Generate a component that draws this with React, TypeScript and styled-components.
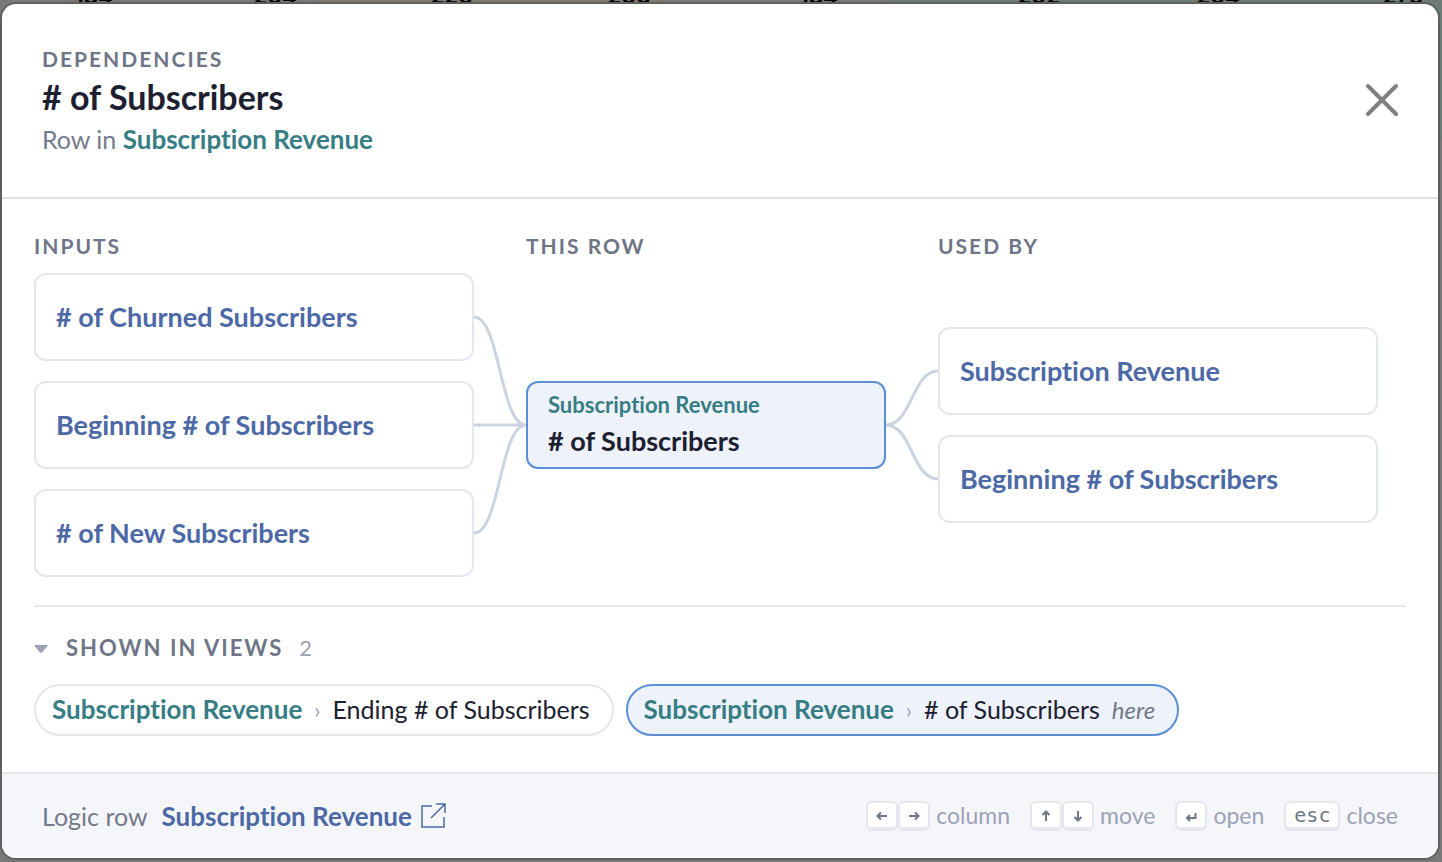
import React from "react";
import styled, { createGlobalStyle, css } from "styled-components";

const Global = createGlobalStyle`
  * { box-sizing: border-box; }
  html, body, #root { height: 100%; }
  body {
    margin: 0;
    background: #797979;
    font-family: Lato, "Open Sans", sans-serif;
    font-variant-ligatures: none;
    color: #1c2030;
  }
  h1, h2, p, ul { margin: 0; padding: 0; }
  ul { list-style: none; }
  button { font: inherit; font-variant-ligatures: none; cursor: pointer; }
  a { color: inherit; text-decoration: none; }
`;

const Page = styled.div`
  position: relative;
  min-height: 100%;
  padding: 4px 4px 4px 2px;
  display: flex;
  overflow: hidden;
`;

const Sheet = styled.div`
  position: absolute;
  inset: 0;
  background: linear-gradient(#6d7b76 140px, #797979 140px) right / 544px 100% no-repeat, #797979;
`;

const SheetRow = styled.div`
  display: flex;
  align-items: flex-end;
  height: 4px;
  overflow: hidden;
  background: linear-gradient(90deg, #797979 22%, #7f786c 22% 46%, #797979 46% 62%, #6d7b76 62%);
`;

const SheetCell = styled.span<{ $w: number }>`
  flex: ${(p) => p.$w} 0 0;
  text-align: right;
  font: 700 22px/28px Inter, sans-serif;
  height: 22px;
  color: #000;
`;

const Dialog = styled.section`
  position: relative;
  flex: 1;
  min-width: 0;
  display: flex;
  flex-direction: column;
  background: #fff;
  border-radius: 14px;
  box-shadow: 0 0 0 2px #5f6062;
  overflow: hidden;
`;

const Header = styled.header`
  display: flex;
  align-items: center;
  justify-content: space-between;
  height: 195px;
  padding: 0 40px;
  border-bottom: 2px solid #dfe3e9;
`;

const Overline = styled.p`
  font-size: 21px;
  line-height: 28px;
  font-weight: 700;
  letter-spacing: 2px;
  text-transform: uppercase;
  color: #6e7587;
`;

const Title = styled.h1`
  font-size: 34px;
  line-height: 48px;
  font-weight: 700;
`;

const Sub = styled.p`
  font-size: 25px;
  line-height: 36px;
  color: #737a8b;
`;

const ViewName = styled.strong`
  font-size: 26px;
  font-weight: 700;
  color: #377d84;
`;

const CloseButton = styled.button`
  display: flex;
  padding: 0 0 2px;
  border: 0;
  background: none;
  color: #808080;
`;

const Body = styled.main`
  flex: 1;
  padding: 32px 32px 0;
`;

const Graph = styled.div`
  display: grid;
  grid-template-columns: 440fr 52fr 360fr 52fr 440fr;
  padding: 0 28px 28px 0;
  border-bottom: 2px solid #e4e7ee;
`;

const Heading = styled.h2`
  font-size: 21px;
  line-height: 30px;
  font-weight: 700;
  letter-spacing: 2px;
  text-transform: uppercase;
  color: #6e7587;
`;

const Column = styled.div`
  display: flex;
  flex-direction: column;
  gap: 12px;
`;

const Nodes = styled.div`
  flex: 1;
  display: flex;
  flex-direction: column;
  justify-content: center;
  gap: 20px;
`;

const Node = styled.button<{ $current?: boolean }>`
  display: flex;
  flex-direction: column;
  justify-content: center;
  align-items: flex-start;
  height: 88px;
  padding: 0 20px;
  border: 2px solid #e4e7ee;
  border-radius: 12px;
  background: #fff;
  color: #4c69a6;
  font-size: 27px;
  line-height: 36px;
  font-weight: 700;
  text-align: left;
  ${(p) => p.$current && css`
    padding-bottom: 4px;
    border-color: #5a8fd4;
    background: #edf2fb;
    color: #1c2030;
  `}
`;

const NodeView = styled.span`
  font-size: 22px;
  color: #377d84;
`;

const Links = styled.svg`
  display: block;
  width: 100%;
  height: 304px;
  margin-top: 42px;
  fill: none;
  stroke: #cbd3e1;
  stroke-width: 3;
`;

const Toggle = styled.button`
  display: flex;
  align-items: center;
  margin: 26px 0 21px;
  padding: 0;
  border: 0;
  background: none;
  line-height: 30px;
  color: #9ba2b6;
  font-size: 22px;
`;

const ToggleLabel = styled.span`
  margin: 0 16px 0 18px;
  font-weight: 700;
  letter-spacing: 2px;
  text-transform: uppercase;
  color: #6e7587;
`;

const Chips = styled.ul`
  display: flex;
  gap: 12px;
`;

const Chip = styled.a<{ $current?: boolean }>`
  display: flex;
  align-items: center;
  height: 52px;
  padding: 0 22px 2px 16px;
  border: 2px solid ${(p) => (p.$current ? "#5a8fd4" : "#e4e7ee")};
  border-radius: 26px;
  background: ${(p) => (p.$current ? "#edf2fb" : "#fff")};
  font-size: 25px;
  white-space: nowrap;
`;

const Sep = styled.span`
  margin: 0 12px;
  color: #9ba2b6;
  font-size: 22px;
`;

const Here = styled.em`
  margin-left: 12px;
  color: #737a8b;
  font-size: 24px;
`;

const Footer = styled.footer`
  display: flex;
  align-items: center;
  justify-content: space-between;
  height: 86px;
  padding: 0 40px;
  border-top: 2px solid #e4e7ee;
  background: #f5f6fa;
`;

const Logic = styled.div`
  display: flex;
  align-items: center;
  gap: 14px;
  font-size: 25px;
  color: #737a8b;
`;

const LogicLink = styled.a`
  display: flex;
  align-items: center;
  gap: 8px;
  font-size: 26px;
  font-weight: 700;
  color: #4c69a6;
`;

const Hints = styled.ul`
  display: flex;
  gap: 20px;
`;

const Hint = styled.li`
  display: flex;
  align-items: center;
  color: #9ba2b6;
  font-size: 23px;
`;

const HintText = styled.span`
  margin: 0 0 2px 6px;
`;

const Key = styled.kbd`
  display: flex;
  align-items: center;
  justify-content: center;
  min-width: 32px;
  height: 30px;
  padding: 0 8px;
  border: 2px solid #e4e7ee;
  border-bottom-width: 4px;
  border-radius: 6px;
  background: #fff;
  color: #6e7587;
  font: 20px/24px "DejaVu Sans Mono", monospace;
`;

const KeyIcon = styled.svg`
  flex: none;
  width: 12px;
  height: 14px;
  fill: none;
  stroke: currentColor;
  stroke-width: 2;
`;

const keyPaths = {
  left: "M11 8H1.500M5 4.500L1.500 8 5 11.500",
  right: "M1 8h9.500M7 4.500L10.500 8 7 11.500",
  up: "M6 13V3.500M2.500 7L6 3.500 9.500 7",
  down: "M6 3v9.500M2.500 9L6 12.500 9.500 9",
  enter: "M10.500 5v5H2M5 7l-3 3 3 3",
};

const ArrowKey = ({ name }: { name: keyof typeof keyPaths }) => (
  <Key aria-label={name}>
    <KeyIcon viewBox="0 0 12 14"><path d={keyPaths[name]} /></KeyIcon>
  </Key>
);

const sheetCells: [string, number][] = [
  ["184", 113], ["204", 184], ["220", 176], ["200", 178],
  ["184", 187], ["202", 222], ["204", 180], ["276", 183],
];

export default function App() {
  return (
    <Page>
      <Global />
      <Sheet aria-hidden="true">
        <SheetRow>
          {sheetCells.map(([text, w], i) => <SheetCell key={i} $w={w}>{text}</SheetCell>)}
          <SheetCell $w={19} />
        </SheetRow>
      </Sheet>
      <Dialog role="dialog" aria-labelledby="title">
        <Header>
          <div>
            <Overline>Dependencies</Overline>
            <Title id="title"># of Subscribers</Title>
            <Sub>Row in <ViewName>Subscription Revenue</ViewName></Sub>
          </div>
          <CloseButton aria-label="Close">
            <svg width="32" height="34" viewBox="0 0 32 34" fill="none" stroke="currentColor" strokeWidth="4" strokeLinecap="round">
              <path d="M2 3l28 28M30 3L2 31" />
            </svg>
          </CloseButton>
        </Header>
        <Body>
          <Graph>
            <Column>
              <Heading>Inputs</Heading>
              <Nodes>
                <Node># of Churned Subscribers</Node>
                <Node>Beginning # of Subscribers</Node>
                <Node># of New Subscribers</Node>
              </Nodes>
            </Column>
            <Links viewBox="0 0 52 304" preserveAspectRatio="none" aria-hidden="true">
              <path d="M0 44C26 44 26 152 52 152M0 152H52M0 260C26 260 26 152 52 152" />
            </Links>
            <Column>
              <Heading>This row</Heading>
              <Nodes>
                <Node $current>
                  <NodeView>Subscription Revenue</NodeView>
                  # of Subscribers
                </Node>
              </Nodes>
            </Column>
            <Links viewBox="0 0 52 304" preserveAspectRatio="none" aria-hidden="true">
              <path d="M0 152C26 152 26 98 52 98M0 152C26 152 26 206 52 206" />
            </Links>
            <Column>
              <Heading>Used by</Heading>
              <Nodes>
                <Node>Subscription Revenue</Node>
                <Node>Beginning # of Subscribers</Node>
              </Nodes>
            </Column>
          </Graph>
          <Toggle aria-expanded="true">
            <svg width="14" height="10" viewBox="0 0 14 10" fill="currentColor"><path d="M1 2h12q1 0 .5 1L8.500 9q-1.500 1.500-3 0L.5 3Q0 2 1 2z" /></svg>
            <ToggleLabel>Shown in views</ToggleLabel>
            2
          </Toggle>
          <Chips>
            <li>
              <Chip href="#ending">
                <ViewName>Subscription Revenue</ViewName><Sep>›</Sep>Ending # of Subscribers
              </Chip>
            </li>
            <li>
              <Chip href="#current" $current>
                <ViewName>Subscription Revenue</ViewName><Sep>›</Sep># of Subscribers<Here>here</Here>
              </Chip>
            </li>
          </Chips>
        </Body>
        <Footer>
          <Logic>
            Logic row
            <LogicLink href="#logic">
              Subscription Revenue
              <svg width="26" height="26" viewBox="0 0 26 26" fill="none" stroke="currentColor" strokeWidth="1.5">
                <path d="M12 3H2v21h22V14M11 15L25 1M16 1h9v9" />
              </svg>
            </LogicLink>
          </Logic>
          <Hints>
            <Hint><ArrowKey name="left" /><ArrowKey name="right" /><HintText>column</HintText></Hint>
            <Hint><ArrowKey name="up" /><ArrowKey name="down" /><HintText>move</HintText></Hint>
            <Hint><ArrowKey name="enter" /><HintText>open</HintText></Hint>
            <Hint><Key>esc</Key><HintText>close</HintText></Hint>
          </Hints>
        </Footer>
      </Dialog>
    </Page>
  );
}
